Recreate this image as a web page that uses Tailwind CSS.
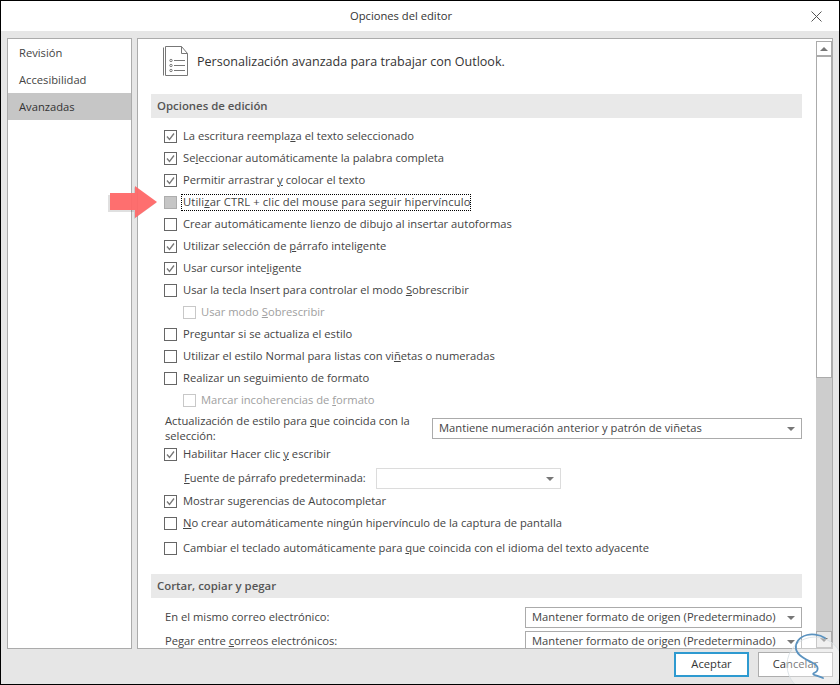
<!DOCTYPE html>
<html lang="es">
<head>
  <meta charset="UTF-8">
  <title>Opciones del editor</title>
  <script src="https://cdn.jsdelivr.net/npm/@tailwindcss/browser@4"></script>
</head>
<body class="bg-white">
<div class="relative w-[840px] h-[685px] overflow-hidden flex flex-col bg-[#e6e6e6] border border-black font-['Open_Sans','Noto_Sans',sans-serif] text-[11.2px] text-[#444]">

  <!-- titulo -->
  <div class="relative h-[30px] shrink-0 bg-white flex items-center justify-center pr-[38px] text-[#333]">
    Opciones del editor
    <svg class="absolute left-[810px] top-[10px]" width="11" height="11" viewBox="0 0 11 11" fill="none" stroke="#555" stroke-width="1"><path d="M0.5 0.5 10.5 10.5M10.5 0.5 0.5 10.5"/></svg>
  </div>

  <div class="flex h-[611px] shrink-0 mt-[7px] ml-[6px] gap-[5px]">
    <!-- menu izquierdo -->
    <div class="w-[125px] bg-white border border-[#ababab] flex flex-col">
      <div class="h-[27px] pl-[11px] pt-[1px] flex items-center">Revisión</div>
      <div class="h-[27px] pl-[11px] pt-[1px] flex items-center">Accesibilidad</div>
      <div class="h-[27px] pl-[11px] pt-[1px] flex items-center bg-[#c6c6c6] text-[#333]">Avanzadas</div>
    </div>

    <!-- panel -->
    <div class="relative w-[696px] bg-white border border-[#ababab] overflow-hidden">
      <div class="w-[678px] h-full overflow-hidden">
        <div class="h-[45px] mb-[10px] flex items-center pl-[25px]">
          <svg width="25" height="31" viewBox="0 0 25 31" fill="none" stroke="#777" stroke-width="1">
            <path d="M0.5 1.5V29.5"/>
            <path d="M2.5 29.5H24.5V7.5L18.5 0.5H2.5V29.5"/>
            <path d="M18.5 0.5V7.5H24.5"/>
            <circle cx="8" cy="14.5" r="1.2"/><circle cx="8" cy="19.5" r="1.2"/><circle cx="8" cy="24.5" r="1.2"/>
            <path d="M11 14.5H22M11 19.5H22M11 24.5H22"/>
          </svg>
          <span class="ml-[9px] pt-[2px] text-[12.55px] text-[#333]">Personalización avanzada para trabajar con Outlook.</span>
        </div>

        <div class="ml-[13px] w-[651px] h-[24px] bg-[#e9e9e9] pl-[6px] pb-[1px] flex items-center font-semibold text-[11.4px] text-[#555]">Opciones de edición</div>

        <div class="mt-[7px] pl-[26px] flex flex-col">
          <div class="h-[22px] flex items-center gap-[6px]"><svg width="13" height="13" viewBox="0 0 13 13" fill="none"><rect x="0.5" y="0.5" width="12" height="12" stroke="#666"/><path d="M3 6.5 5.5 9.5 10 3.5" stroke="#777" stroke-width="1.3"/></svg><span>La escritura reempla<u>z</u>a el texto seleccionado</span></div>
          <div class="h-[22px] flex items-center gap-[6px]"><svg width="13" height="13" viewBox="0 0 13 13" fill="none"><rect x="0.5" y="0.5" width="12" height="12" stroke="#666"/><path d="M3 6.5 5.5 9.5 10 3.5" stroke="#777" stroke-width="1.3"/></svg><span>Se<u>l</u>eccionar automáticamente la palabra completa</span></div>
          <div class="h-[22px] flex items-center gap-[6px]"><svg width="13" height="13" viewBox="0 0 13 13" fill="none"><rect x="0.5" y="0.5" width="12" height="12" stroke="#666"/><path d="M3 6.5 5.5 9.5 10 3.5" stroke="#777" stroke-width="1.3"/></svg><span>Permitir arrastrar <u>y</u> colocar el texto</span></div>
          <div class="h-[22px] flex items-center gap-[4px]"><span class="w-[13px] h-[13px] bg-[#c6c6c6] border border-[#adadad]"></span><span class="pl-[1px] w-[290px] h-[17px] flex items-center border border-dotted border-black"><span class="tracking-[0.13px] whitespace-nowrap">Utili<u>z</u>ar CTRL + clic del mouse para seguir hipervínculo</span></span></div>
          <div class="h-[22px] flex items-center gap-[6px]"><span class="w-[13px] h-[13px] border border-[#666]"></span><span>Crear automáticamente lienzo de dibu<u>j</u>o al insertar autoformas</span></div>
          <div class="h-[22px] flex items-center gap-[6px]"><svg width="13" height="13" viewBox="0 0 13 13" fill="none"><rect x="0.5" y="0.5" width="12" height="12" stroke="#666"/><path d="M3 6.5 5.5 9.5 10 3.5" stroke="#777" stroke-width="1.3"/></svg><span>Utilizar selección de <u>p</u>árrafo inteligente</span></div>
          <div class="h-[22px] flex items-center gap-[6px]"><svg width="13" height="13" viewBox="0 0 13 13" fill="none"><rect x="0.5" y="0.5" width="12" height="12" stroke="#666"/><path d="M3 6.5 5.5 9.5 10 3.5" stroke="#777" stroke-width="1.3"/></svg><span>Usar cursor inte<u>l</u>igente</span></div>
          <div class="h-[22px] flex items-center gap-[6px]"><span class="w-[13px] h-[13px] border border-[#666]"></span><span>Usar la tecla Insert para controlar el modo <u>S</u>obrescribir</span></div>
          <div class="h-[22px] flex items-center gap-[5px] pl-[19px] text-[#a0a0a0]"><span class="w-[13px] h-[13px] border border-[#c8c8c8]"></span><span>Usar modo <u>S</u>obrescribir</span></div>
          <div class="h-[22px] flex items-center gap-[6px]"><span class="w-[13px] h-[13px] border border-[#666]"></span><span>Preguntar si se actualiza el estilo</span></div>
          <div class="h-[22px] flex items-center gap-[6px]"><span class="w-[13px] h-[13px] border border-[#666]"></span><span>Utilizar el estilo Normal para listas con vi<u>ñ</u>etas o numeradas</span></div>
          <div class="h-[22px] flex items-center gap-[6px]"><span class="w-[13px] h-[13px] border border-[#666]"></span><span>Realizar un seguimiento de formato</span></div>
          <div class="h-[22px] flex items-center gap-[5px] pl-[19px] text-[#a0a0a0]"><span class="w-[13px] h-[13px] border border-[#c8c8c8]"></span><span>Marcar incoherencias de <u>f</u>ormato</span></div>
        </div>

        <div class="mt-[2px] pl-[27px] flex h-[28px]">
          <div class="w-[267px] leading-[15px]">Actualización de estilo para <u>q</u>ue coincida con la selección:</div>
          <div class="w-[370px] h-[21px] mt-[5px] border border-[#ababab] flex items-center justify-between pl-[6px] pr-[6px]">
            <span>Mantiene numeración anterior y patrón de viñetas</span>
            <span class="w-0 h-0 border-x-[4px] border-x-transparent border-t-[4px] border-t-[#777]"></span>
          </div>
        </div>

        <div class="mt-[2px] pl-[26px] flex flex-col">
          <div class="h-[22px] flex items-center gap-[6px]"><svg width="13" height="13" viewBox="0 0 13 13" fill="none"><rect x="0.5" y="0.5" width="12" height="12" stroke="#666"/><path d="M3 6.5 5.5 9.5 10 3.5" stroke="#777" stroke-width="1.3"/></svg><span>Habilitar Hacer clic <u>y</u> escribir</span></div>
          <div class="h-[23px] mt-[2px] flex items-center pl-[20px]">
            <span class="w-[192px] whitespace-nowrap text-[11px]"><u>F</u>uente de párrafo predeterminada:</span>
            <span class="w-[185px] h-[21px] border border-[#dcdcdc] flex items-center justify-end pr-[6px]"><span class="w-0 h-0 border-x-[4px] border-x-transparent border-t-[4px] border-t-[#777]"></span></span>
          </div>
          <div class="h-[22px] flex items-center gap-[6px]"><svg width="13" height="13" viewBox="0 0 13 13" fill="none"><rect x="0.5" y="0.5" width="12" height="12" stroke="#666"/><path d="M3 6.5 5.5 9.5 10 3.5" stroke="#777" stroke-width="1.3"/></svg><span>Mostrar sugerencias de Autocompletar</span></div>
          <div class="h-[22px] flex items-center gap-[6px]"><span class="w-[13px] h-[13px] border border-[#666]"></span><span><u>N</u>o crear automáticamente ningún hipervínculo de la captura de pantalla</span></div>
          <div class="h-[22px] mt-[3px] flex items-center gap-[6px]"><span class="w-[13px] h-[13px] border border-[#666]"></span><span>Cambiar el teclado automáticamente para <u>q</u>ue coincida con el idioma del texto adyacente</span></div>
        </div>

        <div class="mt-[15px] ml-[13px] w-[651px] h-[24px] bg-[#e9e9e9] pl-[6px] pb-[1px] flex items-center font-semibold text-[11.4px] text-[#555]">Cortar, copiar y pegar</div>

        <div class="mt-[9px] pl-[27px] pr-[14px] h-[21px] flex items-center justify-between">
          <span>En el mismo correo electrónico:</span>
          <div class="w-[277px] h-[21px] border border-[#ababab] flex items-center justify-between pl-[6px] pr-[6px]"><span class="whitespace-nowrap">Mantener formato de origen (Predeterminado)</span><span class="w-0 h-0 border-x-[4px] border-x-transparent border-t-[4px] border-t-[#777]"></span></div>
        </div>
        <div class="mt-[3px] pl-[27px] pr-[14px] h-[21px] flex items-center justify-between">
          <span>Pegar entre <u>c</u>orreos electrónicos:</span>
          <div class="w-[277px] h-[21px] border border-[#ababab] flex items-center justify-between pl-[6px] pr-[6px]"><span class="whitespace-nowrap">Mantener formato de origen (Predeterminado)</span><span class="w-0 h-0 border-x-[4px] border-x-transparent border-t-[4px] border-t-[#777]"></span></div>
        </div>
      </div>

      <!-- barra de desplazamiento -->
      <div class="absolute right-0 top-0 bottom-0 w-[16px] bg-[#cdcdcd] flex flex-col">
        <div class="h-[17px] shrink-0 bg-white"></div>
        <div class="h-[322px] shrink-0 bg-white border border-[#ababab]"></div>
      </div>
      <div class="absolute right-0 top-[2px] w-[16px] h-[15px] bg-white border border-[#ababab] flex items-center justify-center"><span class="w-0 h-0 border-x-[4px] border-x-transparent border-b-[4px] border-b-[#777]"></span></div>
      <div class="absolute right-0 bottom-0 w-[16px] h-[17px] bg-[#e8e8e8] border border-[#ababab] flex items-center justify-center"><span class="w-0 h-0 border-x-[4px] border-x-transparent border-t-[4px] border-t-[#777]"></span></div>
    </div>
  </div>

  <!-- botones -->
  <div class="flex justify-end gap-[9px] mt-[3px] pr-[6px]">
    <button class="w-[75px] h-[25px] bg-white border-2 border-[#2e9ad0] text-[#333]">Aceptar</button>
    <button class="w-[75px] h-[25px] bg-white border border-[#adadad] text-[#333]">Cancelar</button>
  </div>

  <!-- flecha -->
  <svg class="absolute left-[106px] top-[183px]" width="54" height="38" viewBox="0 0 54 38">
    <path d="M1 11H27V3L49 19 27 35V28H1Z" fill="#000" opacity="0.12"/>
    <path d="M3 9H28V2L50 18 28 34V26H3Z" fill="#ff6868" fill-opacity="0.95"/>
  </svg>

  <!-- marca de agua -->
  <svg class="absolute left-[780px] top-[630px]" width="60" height="55" viewBox="0 0 60 55" fill="none">
    <circle cx="34" cy="34" r="28" fill="#fff" fill-opacity="0.35" stroke="#d5dde2" stroke-opacity="0.8"/>
    <path d="M44 7C38 3 30 3 26 4 18 6 14 12 15 18 16 24 24 28 32 32 38 35 38 40 33 42 30 44 36 44 42 47" stroke="#5b93c0" stroke-width="1.8" stroke-linecap="round"/>
  </svg>
</div>
</body>
</html>
